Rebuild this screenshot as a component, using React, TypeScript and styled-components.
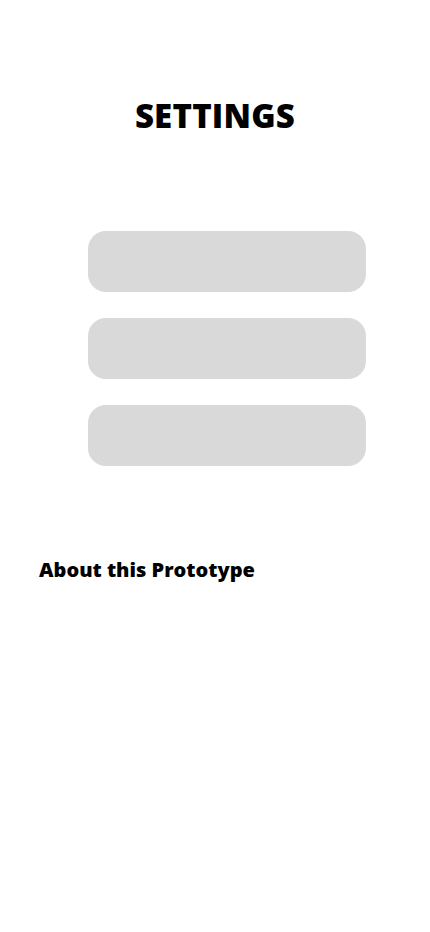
import React from "react";
import styled, { createGlobalStyle } from "styled-components";

const Global = createGlobalStyle`
  html, body { margin: 0; padding: 0; background: #ffffff; }
  body { font-family: "Open Sans", "Noto Sans", sans-serif; color: #000; }
`;

const Page = styled.div`
  width: 430px;
  height: 932px;
  display: flex;
  flex-direction: column;
  box-sizing: border-box;
  padding-top: 93px;
`;

const Title = styled.h1`
  margin: 0;
  text-align: center;
  font-family: "Open Sans", sans-serif;
  font-weight: 800;
  font-size: 33px;
  line-height: 46px;
  letter-spacing: 0.2px;
`;

const List = styled.div`
  display: flex;
  flex-direction: column;
  gap: 26px;
  margin-top: 92px;
  padding-left: 88px;
`;

const Item = styled.button`
  width: 278px;
  height: 61px;
  border: none;
  border-radius: 18px;
  background: #d9d9d9;
  padding: 0;
`;

const About = styled.h2`
  margin: 89px 0 0 39px;
  font-family: "Open Sans", sans-serif;
  font-weight: 800;
  font-size: 20px;
  line-height: 30px;
`;

export default function App() {
  return (
    <>
      <Global />
      <Page>
        <Title>SETTINGS</Title>
        <List>
          <Item aria-label="Setting 1" />
          <Item aria-label="Setting 2" />
          <Item aria-label="Setting 3" />
        </List>
        <About>About this Prototype</About>
      </Page>
    </>
  );
}
